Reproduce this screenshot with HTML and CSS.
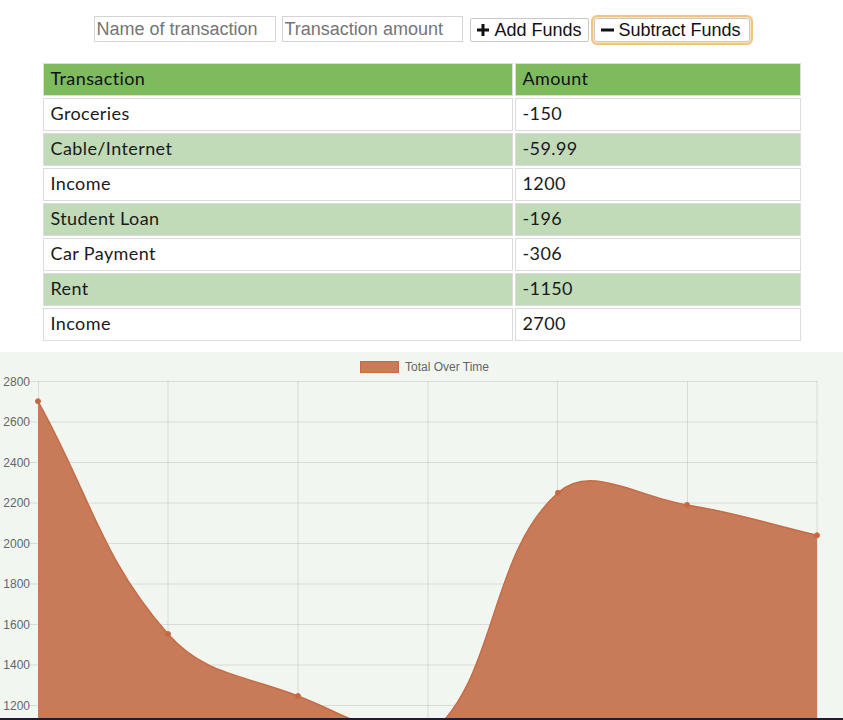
FILE: index.html
```html
<!DOCTYPE html>
<html>
<head>
<meta charset="utf-8">
<title>Budget Tracker</title>
<link rel="stylesheet" href="styles.css">
</head>
<body>
<div class="controls">
  <input class="field field-name" type="text" placeholder="Name of transaction">
  <input class="field field-amount" type="number" placeholder="Transaction amount">
  <button class="btn btn-add"><svg class="ico" viewBox="0 0 12 12" width="12" height="12"><path d="M4.5 0h3v4.5H12v3H7.5V12h-3V7.5H0v-3h4.5z" fill="#111"/></svg><span class="btn-label">Add Funds</span></button>
  <button class="btn btn-sub is-focused"><svg class="ico" viewBox="0 0 13 12" width="13" height="12"><rect x="0" y="4.5" width="13" height="3" fill="#111"/></svg><span class="btn-label">Subtract Funds</span></button>
</div>

<table class="ledger">
  <thead>
    <tr><th class="col-name">Transaction</th><th class="col-amt">Amount</th></tr>
  </thead>
  <tbody>
    <tr><td>Groceries</td><td>-150</td></tr>
    <tr><td>Cable/Internet</td><td>-59.99</td></tr>
    <tr><td>Income</td><td>1200</td></tr>
    <tr><td>Student Loan</td><td>-196</td></tr>
    <tr><td>Car Payment</td><td>-306</td></tr>
    <tr><td>Rent</td><td>-1150</td></tr>
    <tr><td>Income</td><td>2700</td></tr>
  </tbody>
</table>

<div class="chart">
  <svg class="chart-svg" width="843" height="366" viewBox="0 352 843 366">
    <g class="legend">
      <rect x="360.5" y="361.5" width="38" height="11" fill="#c77b58" stroke="#c9693f" stroke-width="1"/>
      <text x="405" y="370.5" class="legend-text">Total Over Time</text>
    </g>
    <g class="grid" stroke="rgba(0,0,0,0.1)" stroke-width="1">
      <line x1="28" y1="381.5" x2="817" y2="381.5"/>
      <line x1="28" y1="422" x2="817" y2="422"/>
      <line x1="28" y1="462.5" x2="817" y2="462.5"/>
      <line x1="28" y1="503" x2="817" y2="503"/>
      <line x1="28" y1="543.5" x2="817" y2="543.5"/>
      <line x1="28" y1="584" x2="817" y2="584"/>
      <line x1="28" y1="624.5" x2="817" y2="624.5"/>
      <line x1="28" y1="665" x2="817" y2="665"/>
      <line x1="28" y1="705.5" x2="817" y2="705.5"/>
      <line x1="38.5" y1="381" x2="38.5" y2="760"/>
      <line x1="168" y1="381" x2="168" y2="760"/>
      <line x1="298" y1="381" x2="298" y2="760"/>
      <line x1="428" y1="381" x2="428" y2="760"/>
      <line x1="557.5" y1="381" x2="557.5" y2="760"/>
      <line x1="687.5" y1="381" x2="687.5" y2="760"/>
      <line x1="817" y1="381" x2="817" y2="760"/>
    </g>
    <g class="ticks">
      <text x="30" y="385.5">2800</text>
      <text x="30" y="426">2600</text>
      <text x="30" y="466.5">2400</text>
      <text x="30" y="507">2200</text>
      <text x="30" y="547.5">2000</text>
      <text x="30" y="588">1800</text>
      <text x="30" y="628.5">1600</text>
      <text x="30" y="669">1400</text>
      <text x="30" y="709.5">1200</text>
    </g>
    <path class="area" d="M38,401.25 C90,494.35 100.5,557.45 168,634 C204.5,675.35 244.5,675.05 298,696 C348.5,715.77 393.65,745.5 428,735.8 C497.65,681.36 487.53,555.63 558,492.8 C591.13,463.27 635.98,496.53 687,504.9 C739.58,513.53 765,523.14 817,535.3 L817,760 L38,760 Z"/>
    <path class="line" d="M38,401.25 C90,494.35 100.5,557.45 168,634 C204.5,675.35 244.5,675.05 298,696 C348.5,715.77 393.65,745.5 428,735.8 C497.65,681.36 487.53,555.63 558,492.8 C591.13,463.27 635.98,496.53 687,504.9 C739.58,513.53 765,523.14 817,535.3"/>
    <g class="pts">
      <circle cx="38" cy="401.25" r="2.5"/>
      <circle cx="168" cy="634" r="2.5"/>
      <circle cx="298" cy="696" r="2.5"/>
      <circle cx="558" cy="492.8" r="2.5"/>
      <circle cx="687" cy="504.9" r="2.5"/>
      <circle cx="817" cy="535.3" r="2.5"/>
    </g>
  </svg>
</div>
<div class="dock"></div>
</body>
</html>
```

FILE: styles.css
```css
html, body {
  margin: 0;
  padding: 0;
  background: #ffffff;
}

body {
  width: 843px;
  height: 720px;
  overflow: hidden;
  font-family: "Liberation Sans", Arial, sans-serif;
}

.controls {
  display: flex;
  justify-content: center;
  align-items: flex-end;
  padding-top: 16px;
  height: 26px;
}

.field {
  box-sizing: border-box;
  height: 26px;
  margin: 0 6px 0 0;
  padding: 1px 2px 0;
  border: 1px solid #d4d4d4;
  background: #fff;
  font-family: "Liberation Sans", Arial, sans-serif;
  font-size: 18px;
  color: #222;
  outline: none;
}

.field::placeholder {
  color: #757575;
}

.field-name { width: 182px; }
.field-amount { width: 181px; margin-right: 7px; -moz-appearance: textfield; }
.field-amount::-webkit-inner-spin-button,
.field-amount::-webkit-outer-spin-button { -webkit-appearance: none; margin: 0; }

.btn {
  box-sizing: border-box;
  display: flex;
  align-items: center;
  justify-content: flex-start;
  gap: 6px;
  height: 24px;
  margin: 0;
  padding: 0 0 0 6px;
  border: 1px solid #c9c9c9;
  border-radius: 2px;
  background: #fff;
  font-family: "Liberation Sans", Arial, sans-serif;
  font-size: 18px;
  line-height: 1;
  color: #111;
  white-space: nowrap;
  overflow: visible;
}

.btn-label { white-space: nowrap; }

.btn-add { width: 119px; margin-right: 5px; }
.btn-sub { width: 156px; gap: 5px; }

.btn.is-focused {
  box-shadow: 0 0 0 1px #fbe3bd, 0 0 0 3px #f2c47e;
  border-radius: 3px;
}

.ico { flex: none; display: block; }

.ledger {
  margin: 19px auto 0;
  width: 762px;
  border-collapse: separate;
  border-spacing: 2px;
  font-family: "Lato", "Noto Sans", sans-serif;
  font-size: 18px;
  letter-spacing: 0.4px;
  color: #1a1a1a;
}

.ledger th,
.ledger td {
  box-sizing: border-box;
  height: 33px;
  padding: 0 7px 3px;
  border: 1px solid #dcdcdc;
  text-align: left;
  font-weight: normal;
  vertical-align: middle;
}

.ledger th {
  background: #7dbb5e;
  color: #111;
}

.col-name { width: 470px; }

.ledger tbody tr:nth-child(even) td {
  background: #c1dab8;
}

.ledger tbody tr:nth-child(odd) td {
  background: #ffffff;
}

.chart {
  margin-top: 9px;
  height: 366px;
  background: #f2f6f0;
}

.chart-svg {
  display: block;
}

.legend-text {
  font-family: "Liberation Sans", Arial, sans-serif;
  font-size: 12px;
  fill: #666;
}

.ticks text {
  font-family: "Liberation Sans", Arial, sans-serif;
  font-size: 12px;
  fill: #666;
  text-anchor: end;
}

.area {
  fill: #c77b58;
}

.line {
  fill: none;
  stroke: #c66b45;
  stroke-width: 1.5;
}

.pts circle {
  fill: #c9683f;
  stroke: #c66b45;
  stroke-width: 1;
}

.dock {
  height: 2px;
  background: #1f1c34;
}
```
